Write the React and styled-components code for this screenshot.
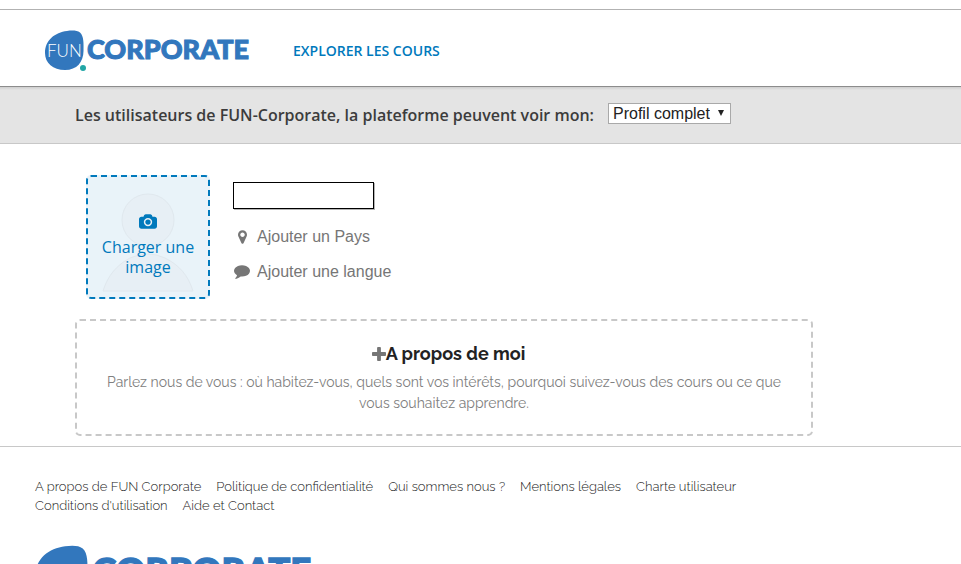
import React from "react";
import styled, { createGlobalStyle } from "styled-components";

const GlobalStyle = createGlobalStyle`
  *, *::before, *::after { box-sizing: border-box; }
  body {
    margin: 0;
    background: #fff;
    color: #3c3c3c;
    font-family: "Open Sans", sans-serif;
    font-size: 16px;
  }
`;

const Page = styled.div`
  padding-top: 9px;
`;

const Header = styled.header`
  display: flex;
  align-items: center;
  gap: 45px;
  height: 78px;
  padding: 5px 44px 0;
  border-top: 1px solid #b2b2b2;
  border-bottom: 1px solid #8c8c8c;
`;

const LogoLink = styled.a`
  display: block;
  line-height: 0;
`;

const LogoSvg = styled.svg`
  display: block;
  width: ${(p) => p.$width}px;
  height: auto;
  overflow: visible;
`;

const NavLink = styled.a`
  color: #0079bc;
  font-size: 14px;
  font-weight: 600;
  line-height: 20px;
  text-decoration: none;
  text-transform: uppercase;
`;

const PrivacyBar = styled.div`
  display: flex;
  align-items: center;
  gap: 14px;
  height: 57px;
  padding: 0 75px;
  background: linear-gradient(#cecece, #e4e4e4 3px);
  border-bottom: 1px solid #c8c8c8;
`;

const PrivacyLabel = styled.label`
  font-size: 16px;
  font-weight: 600;
  line-height: 24px;
`;

const SelectWrap = styled.span`
  display: grid;
  align-items: center;
  margin-bottom: 4px;

  > * { grid-area: 1 / 1; }
`;

const Select = styled.select`
  appearance: none;
  height: 21px;
  padding: 0 20px 0 4px;
  border: 1px solid #a9a9a9;
  border-radius: 0;
  background: #fff;
  color: #222;
  font: 16px/19px "Liberation Sans", Arial, sans-serif;
`;

const Arrow = styled.svg`
  justify-self: end;
  width: 6px;
  height: 6px;
  margin-right: 7px;
  pointer-events: none;
`;

const Main = styled.main`
  padding: 31px 148px 10px 75px;
`;

const Profile = styled.section`
  display: flex;
  gap: 23px;
  padding-left: 11px;
`;

const Upload = styled.button`
  display: grid;
  flex: none;
  width: 124px;
  height: 124px;
  padding: 0;
  border: 2px dashed #0079bc;
  border-radius: 5px;
  background: #e9f3f9;
  color: #0079bc;
  font: 16px/20px "Open Sans", sans-serif;
  cursor: pointer;

  > * { grid-area: 1 / 1; }
`;

const Silhouette = styled.svg`
  width: 120px;
  height: 120px;
`;

const UploadText = styled.span`
  display: flex;
  flex-direction: column;
  align-items: center;
  gap: 8px;
  padding: 37px 10px 0;
`;

const Icon = styled.svg`
  flex: none;
  width: ${(p) => p.$w}px;
  height: ${(p) => p.$h}px;
  fill: currentColor;
  fill-rule: evenodd;
`;

const Fields = styled.div`
  display: flex;
  flex-direction: column;
  align-items: flex-start;
  padding-top: 7px;
`;

const NameInput = styled.input`
  width: 141px;
  height: 27px;
  margin-bottom: 16px;
  padding: 0 6px;
  border: 1px solid #000;
  border-radius: 0;
  background: #fff;
  box-shadow: 1px 1px 0 #b4b4b4;
  font: 16px "Liberation Sans", Arial, sans-serif;
`;

const FieldButton = styled.button`
  display: flex;
  align-items: center;
  gap: 6px;
  height: 24px;
  margin-bottom: 11px;
  padding: 0;
  border: 0;
  background: none;
  color: #767676;
  font: 16px/24px "Liberation Sans", Arial, sans-serif;
  cursor: pointer;
`;

const IconSlot = styled.span`
  display: flex;
  justify-content: center;
  width: 18px;
`;

const About = styled.section`
  margin-top: 20px;
  padding: 22px 28px 20px;
  border: 2px dashed #c8c8c8;
  border-radius: 5px;
  text-align: center;
  font-family: Raleway, Lato, sans-serif;
`;

const AboutTitle = styled.h2`
  display: flex;
  align-items: center;
  justify-content: center;
  margin: 0 0 7px;
  padding-left: 9px;
  color: #222;
  font-size: 18px;
  font-weight: 700;
  line-height: 22px;

  svg { color: #767676; }
`;

const AboutText = styled.p`
  margin: 0;
  color: #808080;
  font-size: 14px;
  font-weight: 400;
  line-height: 21px;
`;

const Footer = styled.footer`
  padding: 30px 148px 20px 34px;
  border-top: 1px solid #c8c8c8;
`;

const FooterNav = styled.nav`
  display: flex;
  flex-wrap: wrap;
  column-gap: 15px;
  margin-bottom: 30px;
  padding-left: 1px;
`;

const FooterLink = styled.a`
  color: #222;
  font: 300 13px/19px Raleway, Lato, sans-serif;
  text-decoration: none;
`;

const ICONS = {
  camera: {
    box: "0 128 1920 1536",
    d: "M960 672q119 0 203.500 84.500t84.500 203.500-84.500 203.500-203.500 84.500-203.500-84.500-84.500-203.500 84.500-203.500 203.500-84.500zm704-288q106 0 181 75t75 181v768q0 106-75 181t-181 75h-1408q-106 0-181-75t-75-181v-768q0-106 75-181t181-75h224l51-136q19-49 69.500-84.500t103.500-35.500h512q53 0 103.500 35.500t69.500 84.500l51 136h224zm-704 1024q185 0 316.500-131.500t131.500-316.500-131.500-316.500-316.500-131.500-316.500 131.500-131.500 316.500 131.500 316.500 316.500 131.500z",
  },
  marker: {
    box: "0 128 1024 1536",
    d: "M768 640q0 106-75 181t-181 75-181-75-75-181 75-181 181-75 181 75 75 181zm256 0q0 109-33 179l-364 774q-16 33-47.500 52t-67.500 19-67.500-19-46.500-52l-365-774q-33-70-33-179 0-212 150-362t362-150 362 150 150 362z",
  },
  comment: {
    box: "0 256 1792 1536",
    d: "M1792 896q0 174-120 321.500t-326 233-450 85.500q-70 0-145-8-198 175-460 242-49 14-114 22h-5q-15 0-27-10.500t-16-27.500v-1q-3-4-.5-12t2-10 4.500-9.500l6-9 7-8.500 8-9q7-8 31-34.500t34.500-38 31-39.500 32.500-51 27-59 26-76q-157-89-247.500-220t-90.500-281q0-174 120-321.500t326-233 450-85.500 450 85.500 326 233 120 321.500z",
  },
  plus: {
    box: "192 128 1408 1408",
    d: "M1600 736v192q0 40-28 68t-68 28h-416v416q0 40-28 68t-68 28h-192q-40 0-68-28t-28-68v-416h-416q-40 0-68-28t-28-68v-192q0-40 28-68t68-28h416v-416q0-40 28-68t68-28h192q40 0 68 28t28 68v416h416q40 0 68 28t28 68z",
  },
};

function Glyph({ name, w, h }) {
  const icon = ICONS[name];
  return (
    <Icon viewBox={icon.box} $w={w} $h={h} aria-hidden="true">
      <path d={icon.d} />
    </Icon>
  );
}

function Logo({ width }) {
  return (
    <LogoLink href="#" aria-label="FUN Corporate">
      <LogoSvg viewBox="0 0 204 41" $width={width}>
        <path
          d="M23 1C28 0.300 33 0.300 36 2.500C40 6 39.600 14 39.500 21C39.400 32 33 40 21 40C9 40 1 33 1 23C1 10 11 2.500 23 1Z"
          fill="#3277bd"
        />
        <circle cx="39" cy="38" r="3" fill="#22a6a6" />
        <text x="3" y="27" fill="#fff" fontFamily="Lato, sans-serif" fontWeight="300" fontSize="17">
          FUN
        </text>
        <text
          x="43"
          y="29"
          fill="#3277bd"
          stroke="#3277bd"
          strokeWidth="1"
          fontFamily="Lato, sans-serif"
          fontWeight="900"
          fontSize="27"
        >
          CORPORATE
        </text>
      </LogoSvg>
    </LogoLink>
  );
}

const FOOTER_LINKS = [
  "A propos de FUN Corporate",
  "Politique de confidentialité",
  "Qui sommes nous ?",
  "Mentions légales",
  "Charte utilisateur",
  "Conditions d'utilisation",
  "Aide et Contact",
];

export default function App() {
  return (
    <Page>
      <GlobalStyle />
      <Header>
        <Logo width={204} />
        <NavLink href="#">Explorer les cours</NavLink>
      </Header>
      <PrivacyBar>
        <PrivacyLabel htmlFor="visibility">
          Les utilisateurs de FUN-Corporate, la plateforme peuvent voir mon:
        </PrivacyLabel>
        <SelectWrap>
          <Select id="visibility" defaultValue="full">
            <option value="full">Profil complet</option>
          </Select>
          <Arrow viewBox="0 0 6 6" aria-hidden="true">
            <path d="M0 0H6L3 6Z" fill="#222" />
          </Arrow>
        </SelectWrap>
      </PrivacyBar>
      <Main>
        <Profile>
          <Upload type="button">
            <Silhouette viewBox="0 0 120 120" fill="#e7eff5" stroke="#e0e8ee" aria-hidden="true">
              <path d="M15 114C20 98 29 88 42 81Q60 73 77 81C91 88 100 98 105 114Z" />
              <circle cx="60" cy="43" r="26" />
            </Silhouette>
            <UploadText>
              <Glyph name="camera" w={18} h={15} />
              Charger une image
            </UploadText>
          </Upload>
          <Fields>
            <NameInput type="text" aria-label="Nom" />
            <FieldButton type="button">
              <IconSlot><Glyph name="marker" w={9} h={14} /></IconSlot>
              Ajouter un Pays
            </FieldButton>
            <FieldButton type="button">
              <IconSlot><Glyph name="comment" w={16} h={14} /></IconSlot>
              Ajouter une langue
            </FieldButton>
          </Fields>
        </Profile>
        <About>
          <AboutTitle>
            <Glyph name="plus" w={14} h={14} />
            A propos de moi
          </AboutTitle>
          <AboutText>
            Parlez nous de vous : où habitez-vous, quels sont vos intérêts, pourquoi
            suivez-vous des cours ou ce que vous souhaitez apprendre.
          </AboutText>
        </About>
      </Main>
      <Footer>
        <FooterNav aria-label="Pied de page">
          {FOOTER_LINKS.map((label) => (
            <FooterLink key={label} href="#">{label}</FooterLink>
          ))}
        </FooterNav>
        <Logo width={276} />
      </Footer>
    </Page>
  );
}
